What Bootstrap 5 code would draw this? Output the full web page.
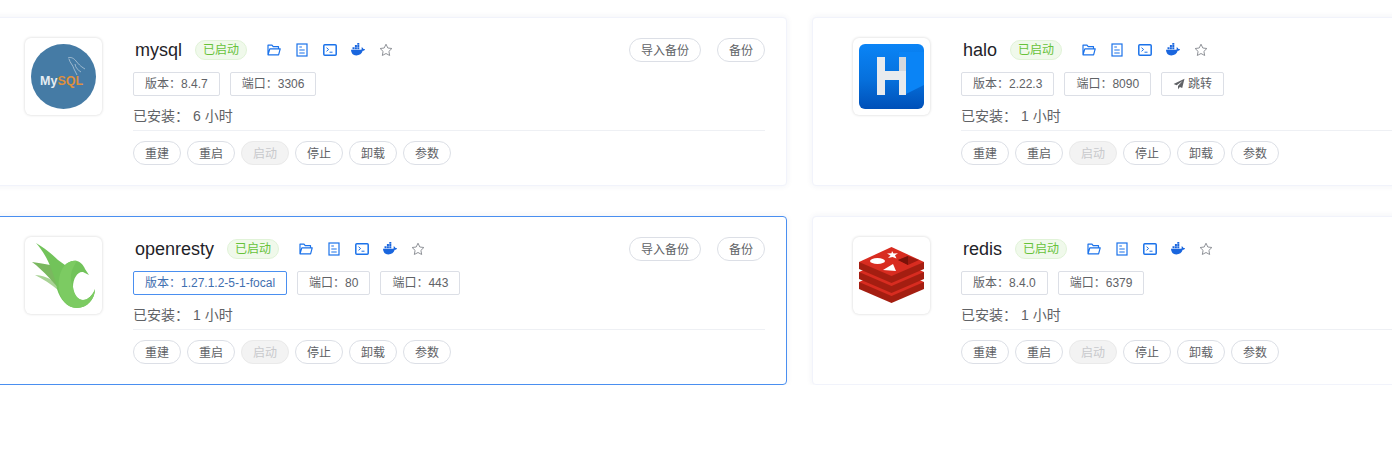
<!DOCTYPE html>
<html lang="zh-CN">

<head>
    <meta charset="UTF-8">
    <meta name="viewport" content="width=device-width, initial-scale=1.0">
    <title>已安装应用</title>
    <link href="https://cdn.jsdelivr.net/npm/bootstrap@5.3.0/dist/css/bootstrap.min.css" rel="stylesheet">
    <style>
        body {
            font-family: "Liberation Sans", "Noto Sans CJK SC", sans-serif;
            overflow: hidden;
            background: #fff;
            color: #606266;
            font-size: 12px;
        }

        .app-grid {
            width: 1640px;
            margin: 17px 0 0 -16px;
            gap: 30px 25px;
        }

        .app-card {
            width: 803px;
            height: 169px;
            padding: 20px 21px 0 40px;
            border: 1px solid #f1f3fb;
            border-radius: 4px;
            box-shadow: 0 0 6px rgba(40, 60, 120, .07);
        }

        .app-card.is-hover {
            border-color: #4a8ff0;
        }

        .logo-box {
            width: 77px;
            height: 77px;
            padding: 6px;
            margin-right: 31px;
            border-radius: 6px;
            background: #fff;
            box-shadow: 0 0 3px rgba(0, 0, 0, .18);
        }

        .logo-box svg {
            display: block;
            width: 65px;
            height: 65px;
        }

        .app-name {
            font-size: 18px;
            line-height: 24px;
            color: #1f2329;
            margin: 0 13px 0 2px;
        }

        .state-tag {
            height: 20px;
            line-height: 18px;
            padding: 0 7px;
            color: #67c23a;
            background: #f0f9eb;
            border: 1px solid #e1f3d8;
            border-radius: 10px;
            margin-right: 20px;
        }

        .tool-icons {
            gap: 14px;
        }

        .tool-icons svg {
            display: block;
            width: 14px;
            height: 14px;
        }

        .pill-btn {
            height: 24px;
            padding: 1px 11px 0;
            font-size: 12px;
            line-height: 22px;
            color: #606266;
            background: #fff;
            border: 1px solid #dcdfe6;
            border-radius: 12px;
        }

        .pill-btn:disabled {
            color: #c8c9cc;
            background: #f3f3f3;
            border-color: #eaeaea;
            opacity: 1;
        }

        .info-tags {
            gap: 10px;
            margin-top: 10px;
        }

        .info-tag {
            height: 24px;
            line-height: 22px;
            padding: 0 11px;
            border: 1px solid #dcdfe6;
            border-radius: 2px;
        }

        .info-tag.is-blue {
            color: #3f6fb0;
            border-color: #4a8ff0;
        }

        .info-tag svg {
            width: 12px;
            height: 12px;
            vertical-align: -2px;
            margin-right: 3px;
        }

        .install-line {
            font-size: 14px;
            line-height: 20px;
            margin-top: 10px;
            padding-bottom: 4px;
            border-bottom: 1px solid #eef0f4;
        }

        .install-line span {
            margin-left: 4px;
        }

        .action-row {
            gap: 6px;
            margin-top: 10px;
        }
    </style>
</head>

<body>
    <svg width="0" height="0" class="position-absolute">
        <symbol id="ic-folder" viewBox="0 0 14 14">
            <path d="M1 11.800V2.200h4l1.200 1.500h5.300v2M1 11.800h10.600L13.200 5.800H2.800L1 11.800z" fill="none" stroke="#1b72ea" stroke-width="1.200" stroke-linejoin="round" />
        </symbol>
        <symbol id="ic-doc" viewBox="0 0 14 14">
            <rect x="2" y="1" width="10" height="12" fill="none" stroke="#1b72ea" stroke-width="1.200" />
            <path d="M4.300 4h2.600M4.300 7h5.400M4.300 10h5.400" stroke="#1b72ea" stroke-width="1.100" />
        </symbol>
        <symbol id="ic-term" viewBox="0 0 14 14">
            <rect x=".8" y="1.800" width="12.400" height="10.400" rx="1" fill="none" stroke="#1b72ea" stroke-width="1.500" />
            <path d="M3.500 4.700L5.600 6.500 3.500 8.300M6.500 9.200h3" fill="none" stroke="#1b72ea" stroke-width="1" />
        </symbol>
        <symbol id="ic-docker" viewBox="0 0 14 14">
            <path d="M0 6.800h10.500c.3-1 .2-2 .1-2.600 1 .3 1.600 1 1.800 1.900.6-.2 1.100-.1 1.600.2-.4 1-1.200 1.500-2.300 1.500C10.800 10.600 8.600 12.500 5.200 12.500 2 12.500 .2 10.200 0 6.800z" fill="#1a66de" />
            <path d="M1.500 4.300h2v2h-2zM3.900 4.300h2v2h-2zM6.300 4.300h2v2h-2zM3.900 2h2v2h-2zM6.300 2h2v2h-2zM6.300 0h2v1.700h-2z" fill="#1a66de" />
        </symbol>
        <symbol id="ic-star" viewBox="0 0 14 14">
            <path d="M7 1.200l1.800 3.800 4.100.5-3 2.900.8 4.100L7 10.500l-3.700 2 .8-4.100-3-2.900 4.100-.5z" fill="none" stroke="#909399" stroke-width="1" stroke-linejoin="round" />
        </symbol>
        <symbol id="ic-plane" viewBox="0 0 12 12">
            <path d="M11.500 .8L.6 6l3 1.300L9.500 3 5 8v3.200l1.900-2.300 2.300 1z" fill="#606266" />
        </symbol>
    </svg>

    <div class="app-grid d-flex flex-wrap">

        <div class="card app-card flex-row">
            <div class="logo-box flex-shrink-0">
                <svg viewBox="0 0 65 65">
                    <circle cx="32.500" cy="32.500" r="32.500" fill="#457ba5" />
                    <path d="M37 14c3-1.500 6 .5 8 3 2.500 3 4 5 9 8M38 15c1 4 4 6 5 10M44 20c.5 4 3 6 6 8M43 25l3 6" fill="none" stroke="#c3d3e0" stroke-width=".7" />
                    <text x="9" y="41" font-family="Liberation Sans" font-weight="700" font-size="12.500" fill="#e6edf2">My<tspan fill="#df8f3c">SQL</tspan></text>
                </svg>
            </div>
            <div class="flex-grow-1">
                <div class="d-flex align-items-center">
                    <span class="app-name">mysql</span>
                    <span class="state-tag">已启动</span>
                    <div class="tool-icons d-flex">
                        <svg><use href="#ic-folder" /></svg><svg><use href="#ic-doc" /></svg><svg><use href="#ic-term" /></svg><svg><use href="#ic-docker" /></svg><svg><use href="#ic-star" /></svg>
                    </div>
                    <div class="ms-auto d-flex gap-3">
                        <button type="button" class="btn pill-btn">导入备份</button>
                        <button type="button" class="btn pill-btn">备份</button>
                    </div>
                </div>
                <div class="info-tags d-flex">
                    <div class="info-tag">版本：8.4.7</div>
                    <div class="info-tag">端口：3306</div>
                </div>
                <div class="install-line">已安装：<span>6 小时</span></div>
                <div class="action-row d-flex">
                    <button type="button" class="btn pill-btn">重建</button>
                    <button type="button" class="btn pill-btn">重启</button>
                    <button type="button" class="btn pill-btn" disabled>启动</button>
                    <button type="button" class="btn pill-btn">停止</button>
                    <button type="button" class="btn pill-btn">卸载</button>
                    <button type="button" class="btn pill-btn">参数</button>
                </div>
            </div>
        </div>

        <div class="card app-card flex-row">
            <div class="logo-box flex-shrink-0">
                <svg viewBox="0 0 65 65">
                    <defs>
                        <linearGradient id="haloBlue" x1="0" y1="0" x2="0" y2="1">
                            <stop offset="0" stop-color="#0a84f6" />
                            <stop offset=".55" stop-color="#0670dc" />
                            <stop offset="1" stop-color="#0050b8" />
                        </linearGradient>
                    </defs>
                    <rect width="65" height="65" rx="6" fill="url(#haloBlue)" />
                    <path d="M40 30l7 20 18-9V8H40z" fill="#0a84f6" />
                    <path d="M18 13h8v14h14V13h7v38h-7V36H26v15h-8z" fill="#e8ebee" />
                    <path d="M40 13h7v14h-7z" fill="#d5d9de" />
                </svg>
            </div>
            <div class="flex-grow-1">
                <div class="d-flex align-items-center">
                    <span class="app-name">halo</span>
                    <span class="state-tag">已启动</span>
                    <div class="tool-icons d-flex">
                        <svg><use href="#ic-folder" /></svg><svg><use href="#ic-doc" /></svg><svg><use href="#ic-term" /></svg><svg><use href="#ic-docker" /></svg><svg><use href="#ic-star" /></svg>
                    </div>
                </div>
                <div class="info-tags d-flex">
                    <div class="info-tag">版本：2.22.3</div>
                    <div class="info-tag">端口：8090</div>
                    <div class="info-tag"><svg><use href="#ic-plane" /></svg>跳转</div>
                </div>
                <div class="install-line">已安装：<span>1 小时</span></div>
                <div class="action-row d-flex">
                    <button type="button" class="btn pill-btn">重建</button>
                    <button type="button" class="btn pill-btn">重启</button>
                    <button type="button" class="btn pill-btn" disabled>启动</button>
                    <button type="button" class="btn pill-btn">停止</button>
                    <button type="button" class="btn pill-btn">卸载</button>
                    <button type="button" class="btn pill-btn">参数</button>
                </div>
            </div>
        </div>

        <div class="card app-card is-hover flex-row">
            <div class="logo-box flex-shrink-0">
                <svg viewBox="0 0 65 65">
                    <path d="M4 32c8 0 16 4 20 7l3 8C20 41 12 36 4 32z" fill="#a9d396" />
                    <path d="M1 19c7 1 13 2 18 3l8 6 6 24C25 42 12 27 1 19z" fill="#7ab85f" />
                    <path d="M5 0c7 4 15 10 22 17l7 5c3-3 8-5 12-4 4 1 7 5 8 8l4 6-6-3c-5-1-10 6-10 15 0 8 5 13 10 13s10-5 12-11c0 10-8 19-18 19-10 0-17-9-20-19C23 30 16 12 5 0z" fill="#72c35a" />
                    <path d="M34 22c3-3 8-5 12-4-4 6-9 14-4 26 1 7 5 13 10 13 5 0 10-5 12-11 0 10-8 19-18 19-8 0-14-6-17-14-3-10-1-22 5-29z" fill="#7ccb62" />
                </svg>
            </div>
            <div class="flex-grow-1">
                <div class="d-flex align-items-center">
                    <span class="app-name">openresty</span>
                    <span class="state-tag">已启动</span>
                    <div class="tool-icons d-flex">
                        <svg><use href="#ic-folder" /></svg><svg><use href="#ic-doc" /></svg><svg><use href="#ic-term" /></svg><svg><use href="#ic-docker" /></svg><svg><use href="#ic-star" /></svg>
                    </div>
                    <div class="ms-auto d-flex gap-3">
                        <button type="button" class="btn pill-btn">导入备份</button>
                        <button type="button" class="btn pill-btn">备份</button>
                    </div>
                </div>
                <div class="info-tags d-flex">
                    <div class="info-tag is-blue">版本：1.27.1.2-5-1-focal</div>
                    <div class="info-tag">端口：80</div>
                    <div class="info-tag">端口：443</div>
                </div>
                <div class="install-line">已安装：<span>1 小时</span></div>
                <div class="action-row d-flex">
                    <button type="button" class="btn pill-btn">重建</button>
                    <button type="button" class="btn pill-btn">重启</button>
                    <button type="button" class="btn pill-btn" disabled>启动</button>
                    <button type="button" class="btn pill-btn">停止</button>
                    <button type="button" class="btn pill-btn">卸载</button>
                    <button type="button" class="btn pill-btn">参数</button>
                </div>
            </div>
        </div>

        <div class="card app-card flex-row">
            <div class="logo-box flex-shrink-0">
                <svg viewBox="0 0 65 65">
                    <path d="M0 39v7l32.500 14L65 46v-7z" fill="#a41e11" />
                    <path d="M0 39l32.500-14L65 39 32.500 53z" fill="#d82c20" />
                    <path d="M0 29v7l32.500 14L65 36v-7z" fill="#a41e11" />
                    <path d="M0 29l32.500-14L65 29 32.500 43z" fill="#d82c20" />
                    <path d="M0 19v7l32.500 14L65 26v-7z" fill="#a41e11" />
                    <path d="M0 19L32.500 4 65 19 32.500 33z" fill="#d82c20" />
                    <ellipse cx="18.500" cy="18" rx="7.500" ry="3" fill="#fff" />
                    <path d="M33 8l1.500 2.500 4.500-.3-3 2 1.500 3.300-4-1.500-4.500 1 2.500-2.500-3.500-2 4.500-.2z" fill="#fff" />
                    <path d="M24 27l10-6 3 7z" fill="#fff" />
                    <path d="M39 17l10-4 11 4-11 5z" fill="#a01a10" />
                    <path d="M39 17l10-4v9z" fill="#7a1209" />
                </svg>
            </div>
            <div class="flex-grow-1">
                <div class="d-flex align-items-center">
                    <span class="app-name">redis</span>
                    <span class="state-tag">已启动</span>
                    <div class="tool-icons d-flex">
                        <svg><use href="#ic-folder" /></svg><svg><use href="#ic-doc" /></svg><svg><use href="#ic-term" /></svg><svg><use href="#ic-docker" /></svg><svg><use href="#ic-star" /></svg>
                    </div>
                </div>
                <div class="info-tags d-flex">
                    <div class="info-tag">版本：8.4.0</div>
                    <div class="info-tag">端口：6379</div>
                </div>
                <div class="install-line">已安装：<span>1 小时</span></div>
                <div class="action-row d-flex">
                    <button type="button" class="btn pill-btn">重建</button>
                    <button type="button" class="btn pill-btn">重启</button>
                    <button type="button" class="btn pill-btn" disabled>启动</button>
                    <button type="button" class="btn pill-btn">停止</button>
                    <button type="button" class="btn pill-btn">卸载</button>
                    <button type="button" class="btn pill-btn">参数</button>
                </div>
            </div>
        </div>

    </div>

    <script src="https://cdn.jsdelivr.net/npm/bootstrap@5.3.0/dist/js/bootstrap.bundle.min.js"></script>
</body>

</html>
